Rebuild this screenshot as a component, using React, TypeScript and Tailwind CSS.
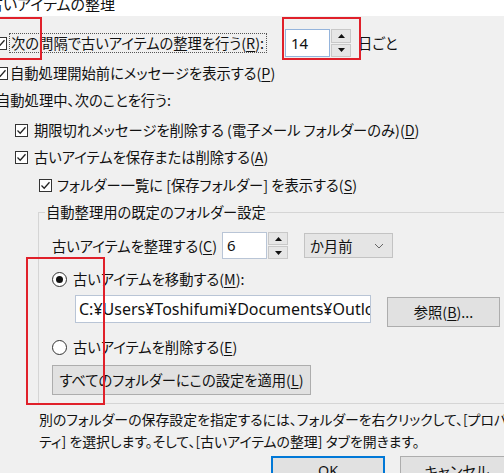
import React from "react";

const Check = () => (
  <span className="inline-flex w-[13px] h-[13px] shrink-0 border border-[#333333] bg-white items-center justify-center">
    <svg width="11" height="11" viewBox="0 0 11 11">
      <path d="M1.5 5.5 L4.2 8.2 L9.5 2.2" fill="none" stroke="#222" strokeWidth="1.3" />
    </svg>
  </span>
);

const Radio = ({ on }: { on?: boolean }) => (
  <span className="inline-flex w-[15px] h-[15px] shrink-0 rounded-full border border-[#333333] bg-white items-center justify-center">
    {on && <span className="w-[7px] h-[7px] rounded-full bg-[#111]" />}
  </span>
);

const Spin = ({ h }: { h: string }) => (
  <div className={`flex flex-col w-[20px] ${h} gap-[1px]`}>
    <div className="flex-1 bg-[#e6e6e6] border border-[#c8c8c8] flex items-center justify-center">
      <svg width="7" height="4" viewBox="0 0 7 4"><path d="M0 4 L3.5 0 L7 4 Z" fill="#111" /></svg>
    </div>
    <div className="flex-1 bg-[#e6e6e6] border border-[#c8c8c8] flex items-center justify-center">
      <svg width="7" height="4" viewBox="0 0 7 4"><path d="M0 0 L3.5 4 L7 0 Z" fill="#111" /></svg>
    </div>
  </div>
);

const U = ({ c }: { c: string }) => <u className="underline underline-offset-[2px] decoration-1">{c}</u>;

export default function App() {
  return (
    <div className="relative w-[504px] h-[473px] overflow-hidden bg-[#f0f0f0] text-[#111] font-['Noto_Sans_CJK_JP',sans-serif] [font-feature-settings:'palt'] text-[14.3px]">
      <div className="h-[16px] bg-white overflow-hidden">
        <div className="ml-[-12px] mt-[-6px] text-[15px] leading-[20px] whitespace-nowrap">古いアイテムの整理</div>
      </div>

      {/* Row 1 */}
      <div className="mt-[14px] h-[26px] flex items-center ml-[-6px] whitespace-nowrap">
        <Check />
        <span className="ml-[2px] w-[258px] border border-dotted border-[#555] px-[1px] leading-[18px]">
          次の間隔で古いアイテムの整理を行う(<U c="R" />):
        </span>
        <div className="ml-[18px] flex items-center gap-[1px]">
          <div className="w-[45px] h-[28px] bg-white border border-[#94b4dc] flex items-center pl-[5px] font-['Noto_Sans',sans-serif] text-[15px]">14</div>
          <Spin h="h-[28px]" />
        </div>
        <span className="ml-[7px]">日ごと</span>
      </div>

      {/* Row 2 */}
      <div className="mt-[4px] h-[26px] flex items-center ml-[-5px] whitespace-nowrap">
        <Check />
        <span className="ml-[2px]">自動処理開始前にメッセージを表示する(<U c="P" />)</span>
      </div>

      {/* Row 3 */}
      <div className="mt-[1px] h-[26px] flex items-center ml-[-4px] whitespace-nowrap">
        自動処理中、次のことを行う:
      </div>

      {/* Row 4 */}
      <div className="mt-[4px] h-[26px] flex items-center pl-[15px] whitespace-nowrap">
        <Check />
        <span className="ml-[6px]">期限切れメッセージを削除する (電子メール フォルダーのみ)(<U c="D" />)</span>
      </div>

      {/* Row 5 */}
      <div className="mt-[1px] h-[26px] flex items-center pl-[15px] whitespace-nowrap">
        <Check />
        <span className="ml-[6px]">古いアイテムを保存または削除する(<U c="A" />)</span>
      </div>

      {/* Row 6 */}
      <div className="mt-[2px] h-[26px] flex items-center pl-[39px] whitespace-nowrap">
        <Check />
        <span className="ml-[5px]">フォルダー一覧に [保存フォルダー] を表示する(<U c="S" />)</span>
      </div>

      {/* Group box */}
      <fieldset className="mt-[4px] ml-[38px] w-[490px] border border-[#d5d5d5] pl-[13px] pb-[8px]">
        <legend className="ml-[-7px] px-[1px] leading-[20px] whitespace-nowrap">自動整理用の既定のフォルダー設定</legend>

        <div className="mt-[10px] h-[27px] flex items-center whitespace-nowrap">
          <span className="w-[170px] shrink-0">古いアイテムを整理する(<U c="C" />)</span>
          <div className="flex items-center gap-[1px]">
            <div className="w-[45px] h-[27px] bg-white border border-[#b9c5d6] flex items-center pl-[4px] font-['Noto_Sans',sans-serif] text-[15px]">6</div>
            <Spin h="h-[27px]" />
          </div>
          <div className="ml-[16px] w-[89px] h-[25px] bg-[#e5e5e5] border border-[#c3c3c3] flex items-center justify-between pl-[5px] pr-[8px]">
            <span>か月前</span>
            <svg width="10" height="6" viewBox="0 0 10 6"><path d="M1 1 L5 5 L9 1" fill="none" stroke="#666" strokeWidth="1" /></svg>
          </div>
        </div>

        <div className="mt-[10px] h-[20px] flex items-center whitespace-nowrap">
          <Radio on />
          <span className="ml-[6px]">古いアイテムを移動する(<U c="M" />):</span>
        </div>

        <div className="mt-[6px] flex items-start pl-[23px]">
          <div className="w-[296px] h-[28px] shrink-0 bg-white border border-[#b9c5d6] overflow-hidden flex items-center pl-[3px] font-['Noto_Sans',sans-serif] text-[16px] whitespace-nowrap">
            C:¥Users¥Toshifumi¥Documents¥Outlook Files¥archive.pst
          </div>
          <button className="ml-[16px] mt-[2px] w-[113px] h-[30px] shrink-0 bg-[#e1e1e1] border border-[#adadad] flex items-center justify-center whitespace-nowrap">
            参照(<U c="B" />)...
          </button>
        </div>

        <div className="mt-[10px] h-[20px] flex items-center whitespace-nowrap">
          <Radio />
          <span className="ml-[6px]">古いアイテムを削除する(<U c="E" />)</span>
        </div>

        <button className="mt-[8px] w-[259px] h-[30px] bg-[#e1e1e1] border border-[#adadad] flex items-center justify-center whitespace-nowrap">
          すべてのフォルダーにこの設定を適用(<U c="L" />)
        </button>
      </fieldset>

      {/* Explanation */}
      <div className="mt-[4px] ml-[39px] leading-[22px] whitespace-nowrap text-[13.9px]">
        <div>別のフォルダーの保存設定を指定するには、フォルダーを右クリックして、[プロパ</div>
        <div>ティ] を選択します。そして、[古いアイテムの整理] タブを開きます。</div>
      </div>

      <div className="mt-[4px] flex pl-[271px] gap-[15px]">
        <button className="w-[114px] h-[30px] shrink-0 bg-[#e1e1e1] border-2 border-[#0078d7] flex items-center justify-center font-['Noto_Sans',sans-serif]">OK</button>
        <button className="w-[114px] h-[30px] shrink-0 bg-[#e1e1e1] border border-[#adadad] flex items-center justify-center">キャンセル</button>
      </div>

      {/* Red annotation rectangles */}
      <div className="absolute left-[-2px] top-[17px] w-[44px] h-[43px] border-2 border-[#e0202a] pointer-events-none" />
      <div className="absolute left-[282px] top-[17px] w-[79px] h-[43px] border-2 border-[#e0202a] pointer-events-none" />
      <div className="absolute left-[26px] top-[257px] w-[79px] h-[148px] border-2 border-[#e0202a] pointer-events-none" />
    </div>
  );
}
